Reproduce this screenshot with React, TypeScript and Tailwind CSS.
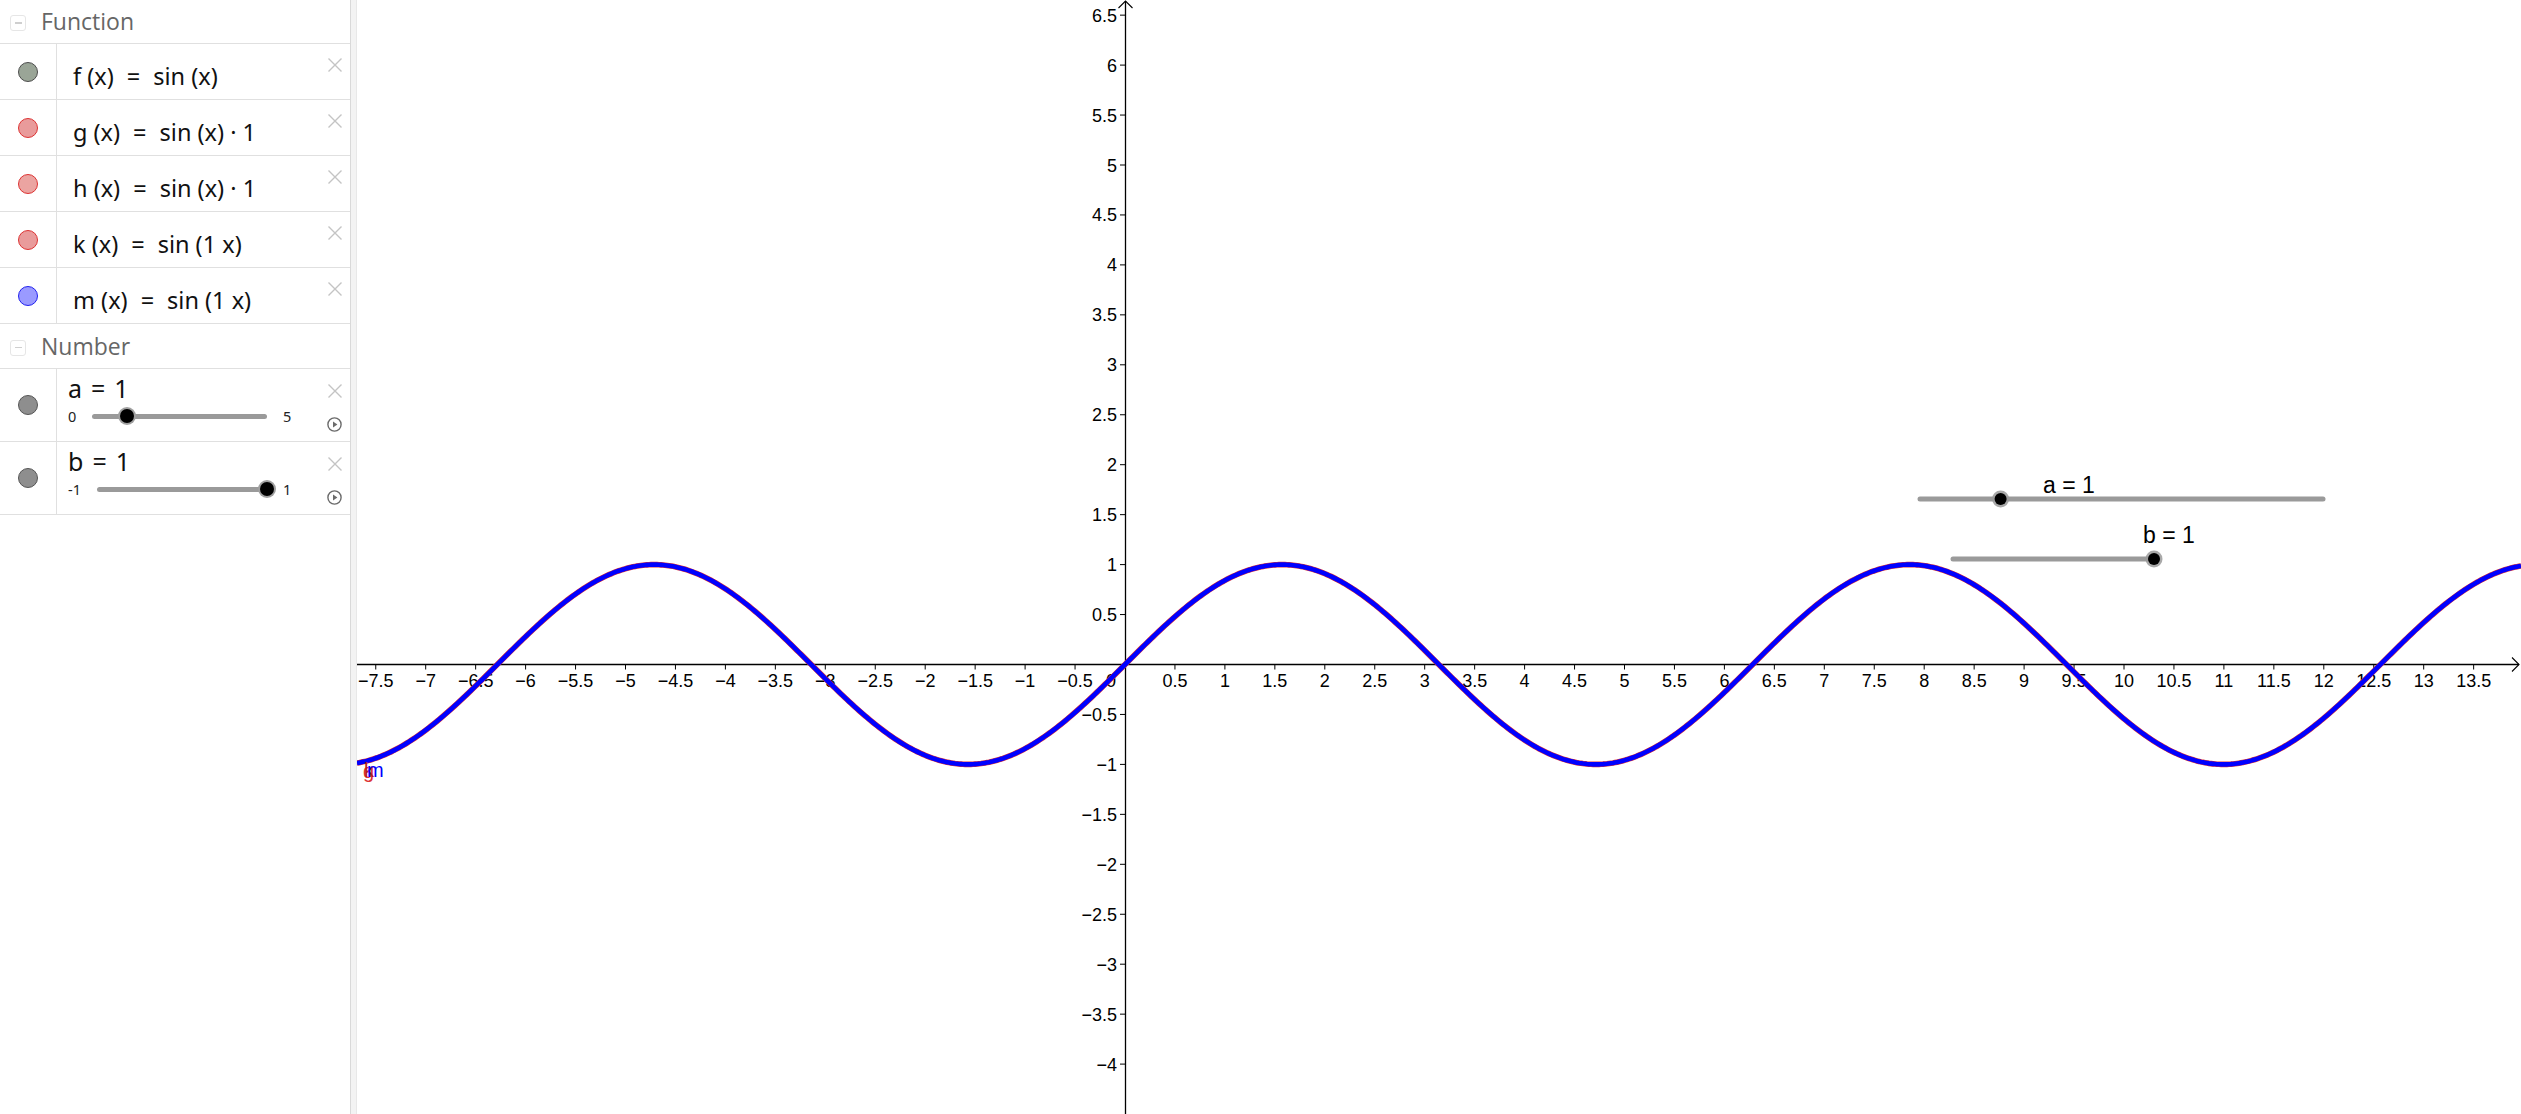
import React from 'react';

// graph geometry (canvas-local pixels)
const OX = 768;
const OY = 664.5;
const U = 99.9;
const W = 2164;
const H = 1114;

const fmt = (v: number) => {
    const s = Number.isInteger(v) ? String(v) : v.toFixed(1);
    return s.replace('-', '\u2212');
};

const CloseIcon = () => (
    <svg width="16" height="16" viewBox="0 0 16 16" className="block">
        <path d="M1.5 1.5 L14.5 14.5 M14.5 1.5 L1.5 14.5" stroke="#c4c4c4" strokeWidth="1.4" fill="none" />
    </svg>
);

const PlayIcon = () => (
    <svg width="15" height="15" viewBox="0 0 15 15" className="block">
        <circle cx="7.5" cy="7.5" r="6.6" stroke="#6b6b6b" strokeWidth="1.4" fill="none" />
        <path d="M6 4.6 L10.4 7.5 L6 10.4 Z" fill="#6b6b6b" />
    </svg>
);

const Dot = ({ fill, border }: { fill: string; border: string }) => (
    <div className="w-[57px] shrink-0 border-r border-[#e0e0e0] flex items-center justify-center">
        <span className="block w-[20px] h-[20px] rounded-full -ml-[1px]" style={{ background: fill, border: `1.5px solid ${border}` }} />
    </div>
);

const SectionHeader = ({ title, h }: { title: string; h: string }) => (
    <div className={`${h} flex items-center border-b border-[#e0e0e0] relative`}>
        <div className="ml-[10px] w-[16px] h-[16px] mt-[3px] rounded-[3px] border border-[#e6e6e6] flex items-center justify-center">
            <span className="block w-[7px] h-[1.5px] bg-[#cfcfcf]" />
        </div>
        <span className="ml-[15px] text-[23px] text-[#666666] font-['Open_Sans',sans-serif] leading-none">{title}</span>
    </div>
);

const FuncRow = ({ name, rhs, fill, border }: { name: string; rhs: string; fill: string; border: string }) => (
    <div className="h-[56px] flex border-b border-[#e0e0e0]">
        <Dot fill={fill} border={border} />
        <div className="flex-1 relative flex items-center pl-[16px] pt-[10px]">
            <span className="text-[23.5px] text-[#111] font-['Noto_Sans',sans-serif] leading-none whitespace-pre">
                {name} (x)
                <span className="inline-block mx-[13px]">=</span>
                {rhs}
            </span>
            <div className="absolute right-[7px] top-[13px]">
                <CloseIcon />
            </div>
        </div>
    </div>
);

const PanelSlider = ({ name, min, max, value, trackW, leftGap }: { name: string; min: string; max: string; value: number; trackW: number; leftGap: string }) => (
    <div className="h-[73px] flex border-b border-[#e0e0e0]">
        <div className="w-[57px] shrink-0 border-r border-[#e0e0e0] flex items-center justify-center">
            <span className="block w-[20px] h-[20px] rounded-full bg-[#8e8e8e] border-[1.5px] border-[#555] -ml-[1px]" />
        </div>
        <div className="flex-1 relative pl-[11px] pt-[5px] font-['Noto_Sans',sans-serif]">
            <div className="text-[25px] leading-[29px] text-[#111] whitespace-pre">
                {name}
                <span className="inline-block mx-[9px]">=</span>1
            </div>
            <div className="flex items-center h-[22px] mt-[2px]">
                <span className="text-[14.5px] text-[#222] w-[24px] leading-none">{min}</span>
                <div className={`${leftGap} relative h-[5px] bg-[#9a9a9a] rounded-full`} style={{ width: trackW }}>
                    <span
                        className="absolute top-1/2 w-[14px] h-[14px] rounded-full bg-black -translate-x-1/2 -translate-y-1/2 shadow-[0_0_0_2px_#a0a0a0]"
                        style={{ left: value * trackW }}
                    />
                </div>
                <span className="text-[14.5px] text-[#222] ml-[16px] leading-none">{max}</span>
            </div>
            <div className="absolute right-[7px] top-[14px]">
                <CloseIcon />
            </div>
            <div className="absolute right-[8px] top-[48px]">
                <PlayIcon />
            </div>
        </div>
    </div>
);

const Graph = () => {
    const xs: number[] = [];
    for (let i = -15; i <= 27; i++) xs.push(i / 2);
    const ys: number[] = [];
    for (let i = -8; i <= 13; i++) ys.push(i / 2);

    let d = '';
    for (let px = 0; px <= W; px += 2) {
        const x = (px - OX) / U;
        const py = OY - Math.sin(x) * U;
        d += (px === 0 ? 'M' : 'L') + px + ' ' + py.toFixed(2) + ' ';
    }

    // slider a: 0..5, slider b: -1..1 (canvas-local)
    const aX0 = 1920 - 357;
    const aX1 = 2323 - 357;
    const bX0 = 1953 - 357;
    const bX1 = 2154 - 357;

    return (
        <svg width={W} height={H} className="block font-['Liberation_Sans',Arial,sans-serif]">
            {/* axes */}
            <line x1={0} y1={OY} x2={W - 2} y2={OY} stroke="#000" strokeWidth="1.3" />
            <line x1={OX + 0.5} y1={1} x2={OX + 0.5} y2={H} stroke="#000" strokeWidth="1.3" />
            <path d={`M${W - 9} ${OY - 7} L${W - 2} ${OY} L${W - 9} ${OY + 7}`} stroke="#000" strokeWidth="1.1" fill="none" />
            <path d={`M${OX - 6.5} ${8} L${OX + 0.5} ${1} L${OX + 7.5} ${8}`} stroke="#000" strokeWidth="1.1" fill="none" />

            {xs.map((v) =>
                v === 0 ? null : (
                    <g key={'x' + v}>
                        <line x1={OX + v * U} y1={OY} x2={OX + v * U} y2={OY + 5} stroke="#000" strokeWidth="1" />
                        <text x={OX + v * U} y={OY + 22} fontSize="18" textAnchor="middle" fill="#000">
                            {fmt(v)}
                        </text>
                    </g>
                )
            )}
            <text x={OX - 9} y={OY + 22} fontSize="18" textAnchor="end" fill="#000">
                0
            </text>
            {ys.map((v) =>
                v === 0 ? null : (
                    <g key={'y' + v}>
                        <line x1={OX - 5} y1={OY - v * U} x2={OX} y2={OY - v * U} stroke="#000" strokeWidth="1" />
                        <text x={OX - 8} y={OY - v * U + 6.5} fontSize="18" textAnchor="end" fill="#000">
                            {fmt(v)}
                        </text>
                    </g>
                )
            )}

            {/* curves: f, g, h, k, m all coincide */}
            <path d={d} stroke="#dd3333" strokeWidth="5.6" fill="none" />
            <path d={d} stroke="#0000ff" strokeWidth="4.6" fill="none" />

            {/* function labels drawn on top of each other, as in the view */}
            <text x={6} y={778} fontSize="20" fill="#dd3333">g</text>
            <text x={7} y={777} fontSize="20" fill="#b02020">k</text>
            <text x={10} y={777} fontSize="20" fill="#0000ff">m</text>

            {/* slider a */}
            <line x1={aX0} y1={499} x2={aX1} y2={499} stroke="#9a9a9a" strokeWidth="5" strokeLinecap="round" />
            <circle cx={aX0 + (aX1 - aX0) / 5} cy={499} r={8.5} fill="#9a9a9a" opacity="0.85" />
            <circle cx={aX0 + (aX1 - aX0) / 5} cy={499} r={6} fill="#000" />
            <text x={2043 - 357} y={493} fontSize="23" fill="#000">a = 1</text>

            {/* slider b */}
            <line x1={bX0} y1={559} x2={bX1} y2={559} stroke="#9a9a9a" strokeWidth="5" strokeLinecap="round" />
            <circle cx={bX1} cy={559} r={8.5} fill="#9a9a9a" opacity="0.85" />
            <circle cx={bX1} cy={559} r={6} fill="#000" />
            <text x={2143 - 357} y={543} fontSize="23" fill="#000">b = 1</text>
        </svg>
    );
};

export default function App() {
    return (
        <div className="w-full h-screen flex bg-white overflow-hidden">
            <div className="w-[351px] shrink-0 border-r border-[#d9d9d9] flex flex-col">
                <SectionHeader title="Function" h="h-[44px]" />
                <FuncRow name="f" rhs="sin (x)" fill="#9aa597" border="#4d4d4d" />
                <FuncRow name="g" rhs="sin (x) · 1" fill="#e99b9b" border="#dd3333" />
                <FuncRow name="h" rhs="sin (x) · 1" fill="#eba4a1" border="#dd3333" />
                <FuncRow name="k" rhs="sin (1 x)" fill="#e99b9b" border="#dd3333" />
                <FuncRow name="m" rhs="sin (1 x)" fill="#9a9aff" border="#2222ee" />
                <SectionHeader title="Number" h="h-[45px]" />
                <PanelSlider name="a" min="0" max="5" value={0.2} trackW={175} leftGap="ml-0" />
                <PanelSlider name="b" min="-1" max="1" value={1} trackW={170} leftGap="ml-[5px]" />
            </div>
            <div className="w-[6px] shrink-0 bg-[#f3f3f3] border-r border-[#e8e8e8]" />
            <div className="flex-1 relative">
                <Graph />
            </div>
        </div>
    );
}
